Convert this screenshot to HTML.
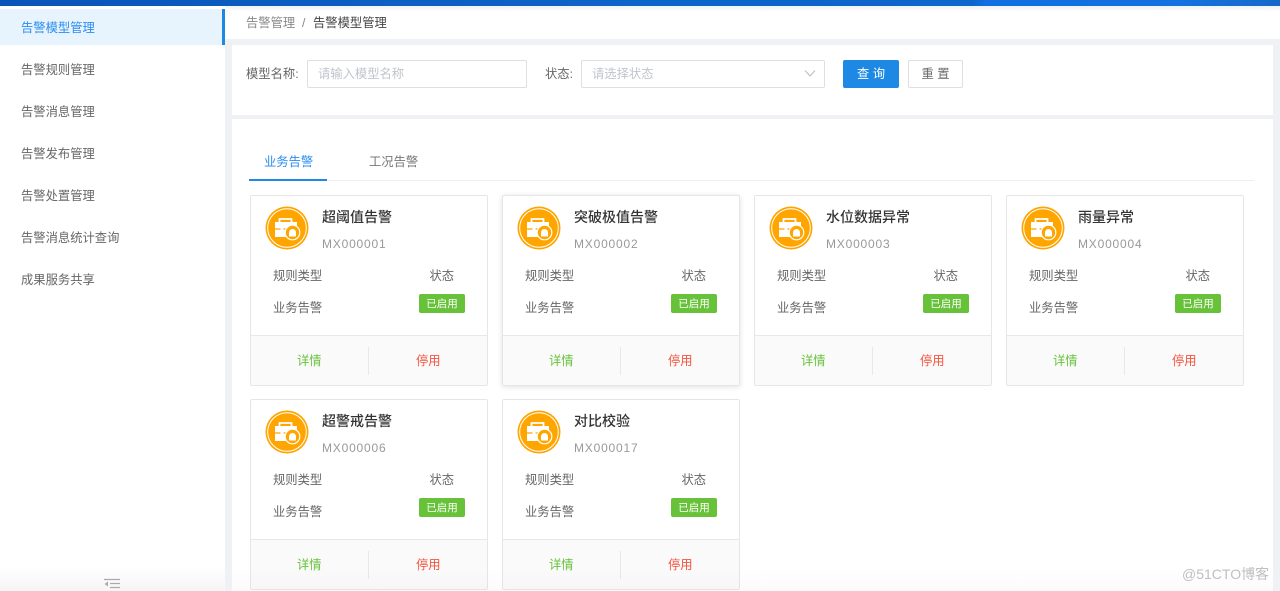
<!DOCTYPE html>
<html lang="zh">
<head>
<meta charset="utf-8">
<style>
html,body{margin:0;padding:0;width:1280px;height:591px;overflow:hidden;background:#eff1f5;font-family:"Liberation Sans","Noto Sans CJK SC",sans-serif;color:#666;}
.a{position:absolute;white-space:nowrap;}
#top{left:0;top:0;width:1280px;height:6px;background:linear-gradient(100deg,#0a55b8 0,#0c63c9 50%,#0d66cc 76%,#1070e0 77%,#1572e0 92%,#1568c8 100%);}
#side{left:0;top:6px;width:225px;height:585px;background:#fff;}
.m{left:21px;font-size:12.300px;line-height:20px;color:#666;}
.card{position:absolute;width:236px;height:189px;background:#fff;border:1px solid #e6e6e6;border-radius:2px;box-sizing:content-box;overflow:hidden;}
.card .foot{position:absolute;left:0;top:139px;width:236px;height:50px;background:#fafafa;border-top:1px solid #e8e8e8;}
.card .sep{position:absolute;left:117px;top:11px;width:1px;height:28px;background:#e8e8e8;}
.card .t{position:absolute;white-space:nowrap;}
.ic{position:absolute;left:14px;top:10px;width:44px;height:44px;}
.ttl{left:71px;top:11px;font-size:14px;line-height:20px;color:#333;font-weight:500;}
.code{left:71px;top:39px;font-size:12px;line-height:18px;color:#999;letter-spacing:.8px;}
.l1{left:22px;top:71px;font-size:12.300px;line-height:18px;color:#666;}
.l2{left:178.500px;top:71px;font-size:12.300px;line-height:18px;color:#666;}
.v1{left:22px;top:103px;font-size:12.300px;line-height:18px;color:#666;}
.tag{position:absolute;left:168px;top:98px;width:46px;height:19px;background:#67c23a;border-radius:2px;color:#fff;font-size:10.500px;line-height:20px;text-align:center;}
.d{position:absolute;left:46px;top:15px;font-size:12.300px;line-height:20px;color:#67c23a;}
.s{position:absolute;left:165px;top:15px;font-size:12.300px;line-height:20px;color:#f5523c;}
</style>
</head>
<body>
<svg width="0" height="0" style="position:absolute">
<defs>
<symbol id="i" viewBox="0 0 44 44">
<circle cx="22" cy="22" r="21.500" fill="#ffa500"/>
<circle cx="22" cy="22" r="19.300" fill="none" stroke="#fff" stroke-width="1"/>
<path d="M14.500 16.500v-3.500h12v3.500" fill="none" stroke="#fff" stroke-width="1.800"/>
<path d="M10 16h22v5a8 8 0 0 0-9 10H10z" fill="#fff"/>
<path d="M10 23h5.500M18.500 23h4" stroke="#ffa500" stroke-width="1.200"/>
<circle cx="27.500" cy="26.500" r="7.300" fill="#ffa500" stroke="#fff" stroke-width="1.200"/>
<path d="M24 30.500v-4a3.500 3.500 0 0 1 7 0v4z" fill="#fff"/>
</symbol>
</defs>
</svg>

<div class="a" id="top"></div>
<div class="a" style="left:0;top:6px;width:1280px;height:33px;background:linear-gradient(#f1f2f5,#fff 6px);"></div>

<div class="a" id="side">
  <div class="a" style="left:0;top:3px;width:222px;height:36px;background:#e8f4fd;"></div>
  <div class="a" style="left:222px;top:3px;width:3px;height:36px;background:#1e88e5;"></div>
  <div class="a" style="left:0;bottom:0;width:225px;height:24px;background:linear-gradient(#fff,#f5f5f5);"></div>
</div>
<div class="a m" style="top:18px;color:#2a8cf0;">告警模型管理</div>
<div class="a m" style="top:60px;">告警规则管理</div>
<div class="a m" style="top:102px;">告警消息管理</div>
<div class="a m" style="top:144px;">告警发布管理</div>
<div class="a m" style="top:186px;">告警处置管理</div>
<div class="a m" style="top:228px;">告警消息统计查询</div>
<div class="a m" style="top:270px;">成果服务共享</div>
<svg class="a" style="left:104px;top:578px;" width="17" height="12" viewBox="0 0 17 12"><path d="M0 1.500h16M6 5.500h10M6 9.500h10" stroke="#aaa" stroke-width="1.300" fill="none"/><path d="M4 3.500v5L0.500 6z" fill="#aaa"/></svg>

<div class="a" style="left:246px;top:14px;font-size:12.300px;line-height:18px;color:#888;">告警管理</div>
<div class="a" style="left:302px;top:14px;font-size:12.300px;line-height:18px;color:#888;">/</div>
<div class="a" style="left:313px;top:14px;font-size:12.300px;line-height:18px;color:#444;">告警模型管理</div>

<div class="a" style="left:232px;top:45px;width:1041px;height:70px;background:#fff;"></div>
<div class="a" style="left:246px;top:65px;font-size:12.300px;line-height:18px;color:#666;">模型名称:</div>
<div class="a" style="left:307px;top:60px;width:218px;height:26px;border:1px solid #dcdfe6;border-radius:2px;background:#fff;"></div>
<div class="a" style="left:318px;top:65px;font-size:12.300px;line-height:18px;color:#c0c4cc;">请输入模型名称</div>
<div class="a" style="left:545px;top:65px;font-size:12.300px;line-height:18px;color:#666;">状态:</div>
<div class="a" style="left:581px;top:60px;width:242px;height:26px;border:1px solid #dcdfe6;border-radius:2px;background:#fff;"></div>
<div class="a" style="left:592px;top:65px;font-size:12.300px;line-height:18px;color:#c0c4cc;">请选择状态</div>
<svg class="a" style="left:804px;top:69px;" width="12" height="9" viewBox="0 0 12 9"><path d="M1 1.500l5 5.500 5-5.500" fill="none" stroke="#bbb" stroke-width="1"/></svg>
<div class="a" style="left:843px;top:60px;width:56px;height:28px;background:#1e88e5;border-radius:2px;color:#fff;font-size:12.300px;line-height:28px;text-align:center;">查 询</div>
<div class="a" style="left:908px;top:60px;width:53px;height:26px;border:1px solid #dcdfe6;border-radius:2px;background:#fff;color:#666;font-size:12.300px;line-height:26px;text-align:center;">重 置</div>

<div class="a" style="left:232px;top:119px;width:1041px;height:472px;background:#fff;"></div>
<div class="a" style="left:264px;top:152px;font-size:12.300px;line-height:20px;color:#2a8cf0;">业务告警</div>
<div class="a" style="left:369px;top:152px;font-size:12.300px;line-height:20px;color:#777;">工况告警</div>
<div class="a" style="left:250px;top:180px;width:1004px;height:1px;background:#eee;"></div>
<div class="a" style="left:249px;top:179px;width:78px;height:2px;background:#1e88e5;"></div>

<div class="card" style="left:250px;top:195px;">
  <svg class="ic"><use href="#i"/></svg>
  <div class="t ttl">超阈值告警</div><div class="t code">MX000001</div>
  <div class="t l1">规则类型</div><div class="t l2">状态</div><div class="t v1">业务告警</div><div class="tag">已启用</div>
  <div class="foot"><div class="d">详情</div><div class="sep"></div><div class="s">停用</div></div>
</div>
<div class="card" style="left:502px;top:195px;box-shadow:0 1px 6px rgba(0,0,0,.12);">
  <svg class="ic"><use href="#i"/></svg>
  <div class="t ttl">突破极值告警</div><div class="t code">MX000002</div>
  <div class="t l1">规则类型</div><div class="t l2">状态</div><div class="t v1">业务告警</div><div class="tag">已启用</div>
  <div class="foot"><div class="d">详情</div><div class="sep"></div><div class="s">停用</div></div>
</div>
<div class="card" style="left:754px;top:195px;">
  <svg class="ic"><use href="#i"/></svg>
  <div class="t ttl">水位数据异常</div><div class="t code">MX000003</div>
  <div class="t l1">规则类型</div><div class="t l2">状态</div><div class="t v1">业务告警</div><div class="tag">已启用</div>
  <div class="foot"><div class="d">详情</div><div class="sep"></div><div class="s">停用</div></div>
</div>
<div class="card" style="left:1006px;top:195px;">
  <svg class="ic"><use href="#i"/></svg>
  <div class="t ttl">雨量异常</div><div class="t code">MX000004</div>
  <div class="t l1">规则类型</div><div class="t l2">状态</div><div class="t v1">业务告警</div><div class="tag">已启用</div>
  <div class="foot"><div class="d">详情</div><div class="sep"></div><div class="s">停用</div></div>
</div>
<div class="card" style="left:250px;top:399px;">
  <svg class="ic"><use href="#i"/></svg>
  <div class="t ttl">超警戒告警</div><div class="t code">MX000006</div>
  <div class="t l1">规则类型</div><div class="t l2">状态</div><div class="t v1">业务告警</div><div class="tag">已启用</div>
  <div class="foot"><div class="d">详情</div><div class="sep"></div><div class="s">停用</div></div>
</div>
<div class="card" style="left:502px;top:399px;">
  <svg class="ic"><use href="#i"/></svg>
  <div class="t ttl">对比校验</div><div class="t code">MX000017</div>
  <div class="t l1">规则类型</div><div class="t l2">状态</div><div class="t v1">业务告警</div><div class="tag">已启用</div>
  <div class="foot"><div class="d">详情</div><div class="sep"></div><div class="s">停用</div></div>
</div>

<div class="a" style="left:232px;top:567px;width:1041px;height:24px;background:linear-gradient(rgba(0,0,0,0),rgba(0,0,0,.015));"></div>
<div class="a" style="left:1182px;top:565px;font-size:14px;line-height:18px;color:rgba(170,170,170,.75);">@51CTO博客</div>
</body>
</html>
